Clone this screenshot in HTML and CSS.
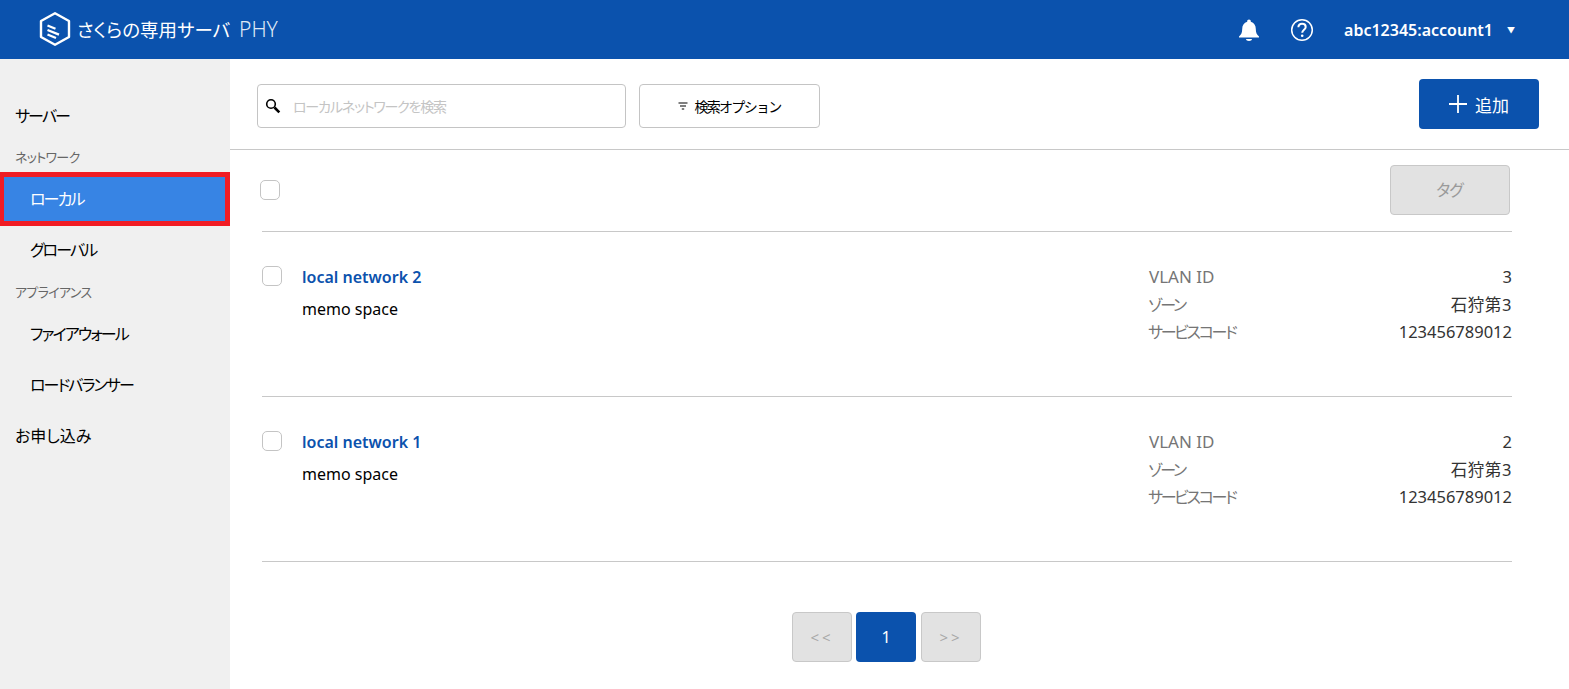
FILE: index.html
```html
<!DOCTYPE html>
<html lang="ja">
<head>
<meta charset="utf-8">
<title>さくらの専用サーバ PHY</title>
<link rel="stylesheet" href="styles.css">
</head>
<body>
<header class="topbar">
  <div class="brand">
    <svg class="logo" width="32" height="34" viewBox="0 0 32 34" fill="none" stroke="#fff">
      <path d="M16 1.300 L30 9 V25 L16 32.700 L2 25 V9 Z" stroke-width="2.400" stroke-linejoin="round"/>
      <path d="M8.500 13.500 L16.500 16.800 M8.500 18 L20 22.600 M8.500 22.500 L17 26" stroke-width="2.300"/>
    </svg>
    <span class="brand-name">さくらの専用サーバ</span>
    <span class="brand-sub">PHY</span>
  </div>
  <div class="top-actions">
    <svg class="bell" width="22" height="24" viewBox="0 0 22 24" fill="#fff">
      <path d="M11 1.500c1.100 0 1.800.8 1.800 1.800v.5c3.300.9 5 3.700 5 7.200 0 4 1 5.500 3.200 7.500v1H1v-1c2.200-2 3.200-3.500 3.200-7.500 0-3.500 1.700-6.300 5-7.200v-.5c0-1 .7-1.800 1.800-1.800z"/>
      <path d="M8 21h6c0 1.200-1.300 2-3 2s-3-.8-3-2z"/>
    </svg>
    <svg class="help" width="24" height="24" viewBox="0 0 24 24" fill="none" stroke="#fff">
      <circle cx="12" cy="12" r="10.300" stroke-width="1.500"/>
      <path d="M8.400 9.300c0-2.200 1.600-3.500 3.700-3.500s3.600 1.200 3.600 3.100c0 2.800-3.500 2.800-3.500 5.900" stroke-width="2"/>
      <circle cx="12.200" cy="17.800" r="1.300" fill="#fff" stroke="none"/>
    </svg>
    <span class="account">abc12345:account1</span>
    <span class="caret">▼</span>
  </div>
</header>
<div class="shell">
  <nav class="sidebar">
    <a class="nav-item top kana">サーバー</a>
    <div class="nav-label">ネットワーク</div>
    <a class="nav-item sub active kana">ローカル</a>
    <a class="nav-item sub kana">グローバル</a>
    <div class="nav-label">アプライアンス</div>
    <a class="nav-item sub kana">ファイアウォール</a>
    <a class="nav-item sub kana">ロードバランサー</a>
    <a class="nav-item top">お申し込み</a>
  </nav>
  <main class="main">
    <div class="toolbar">
      <div class="search">
        <svg width="16" height="16" viewBox="0 0 16 16" fill="none" stroke="#000">
          <circle cx="6" cy="6" r="4.300" stroke-width="1.600"/>
          <path d="M9.500 9.500 L14.300 14.300" stroke-width="2.600"/>
        </svg>
        <span class="placeholder">ローカルネットワークを検索</span>
      </div>
      <button class="option-btn">
        <svg width="10" height="8" viewBox="0 0 10 8" fill="none" stroke="#000" stroke-width="1.200">
          <path d="M0.500 1 H9.500 M2 4 H8 M3.800 7 H6.200"/>
        </svg>
        検索オプション
      </button>
      <button class="add-btn">
        <svg width="18" height="18" viewBox="0 0 18 18" stroke="#fff" stroke-width="1.800">
          <path d="M9 0 V18 M0 9 H18"/>
        </svg>
        追加
      </button>
    </div>
    <div class="content">
      <div class="bulk-row">
        <span class="check bulk-check"></span>
        <button class="tag-btn">タグ</button>
      </div>
      <article class="row">
        <span class="check"></span>
        <div class="row-main">
          <a class="row-name">local network 2</a>
          <div class="row-memo">memo space</div>
        </div>
        <dl class="specs">
          <div class="spec"><dt class="latin">VLAN ID</dt><dd>3</dd></div>
          <div class="spec"><dt>ゾーン</dt><dd class="zone">石狩第3</dd></div>
          <div class="spec"><dt>サービスコード</dt><dd>123456789012</dd></div>
        </dl>
      </article>
      <article class="row">
        <span class="check"></span>
        <div class="row-main">
          <a class="row-name">local network 1</a>
          <div class="row-memo">memo space</div>
        </div>
        <dl class="specs">
          <div class="spec"><dt class="latin">VLAN ID</dt><dd>2</dd></div>
          <div class="spec"><dt>ゾーン</dt><dd class="zone">石狩第3</dd></div>
          <div class="spec"><dt>サービスコード</dt><dd>123456789012</dd></div>
        </dl>
      </article>
      <div class="pager">
        <button class="page disabled">&lt;&lt;</button>
        <button class="page current">1</button>
        <button class="page disabled">&gt;&gt;</button>
      </div>
    </div>
  </main>
</div>
</body>
</html>
```
FILE: styles.css
```css
* { box-sizing: border-box; }
html, body { margin: 0; height: 100%; overflow: hidden; }
body {
  font-family: "Noto Sans", "Noto Sans CJK JP", sans-serif;
  font-size: 16px;
  color: #000;
  background: #fff;
  font-feature-settings: "palt";
}
button { font-feature-settings: "palt"; }
.topbar {
  height: 59px;
  background: #0b52ad;
  color: #fff;
  display: flex;
  align-items: center;
  justify-content: space-between;
  padding: 0 54px 0 39px;
}
.brand { display: flex; align-items: center; margin-top: -2px; }
.logo { margin-right: 6px; }
.brand-name { font-size: 18.500px; }
.brand-sub { font-size: 21px; font-weight: 300; margin-left: 9px; color: #dfe8f5; }
.top-actions { display: flex; align-items: center; }
.bell { margin-right: 30px; }
.help { margin-right: 30px; }
.account { font-size: 16px; font-weight: 600; }
.caret { font-size: 8px; margin-left: 14px; }
.shell { display: flex; height: 630px; }
.sidebar {
  width: 230px;
  flex: none;
  background: #f0f0f0;
  padding-top: 30.500px;
}
.nav-item {
  display: flex;
  align-items: center;
  height: 51px;
  padding-bottom: 1px;
  font-size: 16px;
  color: #000;
  position: relative;
}
.kana { letter-spacing: -1.900px; }
.nav-item.top { padding-left: 15px; }
.nav-item.sub { padding-left: 30px; }
.nav-item.active { color: #fff; background: #3784e4; }
.nav-item.active::after {
  content: "";
  position: absolute;
  left: 0;
  right: 0;
  top: -1px;
  bottom: -2px;
  border: solid #f01c24;
  border-width: 5px 5px 5px 4px;
}
.nav-label {
  height: 32.500px;
  display: flex;
  align-items: center;
  padding-left: 15px;
  font-size: 13px;
  letter-spacing: -0.700px;
  color: #666;
}
.main { flex: 1; min-width: 0; }
.toolbar {
  height: 91px;
  border-bottom: 1px solid #c8c8c8;
  display: flex;
  align-items: flex-start;
  padding: 25px 30px 0 27px;
}
.search {
  width: 369px;
  height: 44px;
  border: 1px solid #c4c4c4;
  border-radius: 4px;
  display: flex;
  align-items: center;
  padding-left: 7px;
}
.placeholder { font-size: 14px; letter-spacing: -1.200px; color: #c4c4c4; margin-left: 12px; }
.option-btn {
  width: 181px;
  height: 44px;
  margin-left: 13px;
  border: 1px solid #c4c4c4;
  border-radius: 4px;
  background: #fff;
  font: 14px "Noto Sans", "Noto Sans CJK JP", sans-serif;
  letter-spacing: -1.700px;
  color: #000;
  display: flex;
  align-items: center;
  justify-content: center;
  gap: 6px;
}
.add-btn {
  width: 120px;
  height: 50px;
  margin-left: auto;
  margin-top: -5px;
  border: 0;
  border-radius: 4px;
  background: #0b52ad;
  color: #fff;
  font: 17px "Noto Sans", "Noto Sans CJK JP", sans-serif;
  display: flex;
  align-items: center;
  justify-content: center;
  gap: 8px;
}
.content { padding: 0 57px 0 32px; }
.bulk-row {
  height: 82px;
  border-bottom: 1px solid #c8c8c8;
  display: flex;
  align-items: flex-start;
  justify-content: space-between;
  padding: 15px 2px 0 0;
}
.check {
  width: 20px;
  height: 20px;
  flex: none;
  border: 1px solid #c4c4c4;
  border-radius: 5px;
  background: #fff;
}
.bulk-check { margin: 15px 0 0 -2px; }
.tag-btn {
  width: 120px;
  height: 50px;
  padding: 0 2px 2px 0;
  border: 1px solid #c8c8c8;
  border-radius: 4px;
  background: #e2e2e2;
  color: #9a9a9a;
  font: 16px "Noto Sans", "Noto Sans CJK JP", sans-serif;
  letter-spacing: -2.500px;
}
.row {
  height: 165px;
  border-bottom: 1px solid #c8c8c8;
  display: flex;
  align-items: flex-start;
  padding-top: 34px;
}
.row-main { flex: 1; margin-left: 20px; margin-top: -2px; }
.row-name {
  display: block;
  font-size: 16px;
  font-weight: 600;
  line-height: 26px;
  color: #0b52ad;
}
.row-memo { font-size: 16px; line-height: 22px; margin-top: 8px; }
.specs { width: 364px; margin: -2px 0 0 0; }
.spec {
  display: flex;
  justify-content: space-between;
  height: 27.500px;
  line-height: 26px;
  font-size: 16px;
}
.spec dt { color: #757575; letter-spacing: -2.300px; }
.spec dt.latin { font-size: 17px; letter-spacing: 0; margin-left: 1px; }
.spec dd { margin: 0; color: #333; font-size: 16.500px; }
.spec dd.zone { letter-spacing: 0.600px; }
.pager {
  display: flex;
  justify-content: center;
  gap: 4px;
  margin: 50px 0 0 -1px;
}
.page {
  width: 60px;
  height: 50px;
  border-radius: 4px;
  font: 16px "Noto Sans", sans-serif;
}
.page.disabled {
  border: 1px solid #c8c8c8;
  background: #e2e2e2;
  color: #a8a8a8;
  font-size: 15px;
  letter-spacing: 3px;
}
.page.current { border: 0; background: #0b52ad; color: #fff; margin-right: 1px; }
```
